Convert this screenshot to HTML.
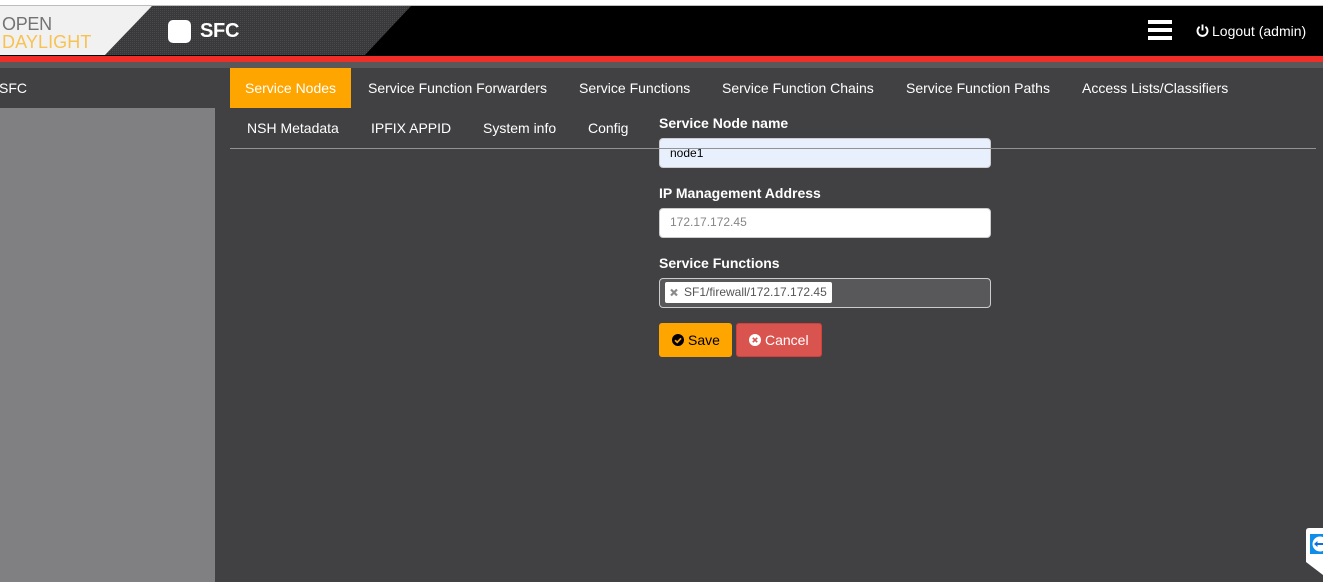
<!DOCTYPE html>
<html>
<head>
<meta charset="utf-8">
<style>
html,body{margin:0;padding:0;background:#414143;}
body{width:1323px;height:582px;position:relative;overflow:hidden;font-family:"Liberation Sans",sans-serif;font-size:14px;color:#fff;}
.a{position:absolute;white-space:nowrap;}
.tab{position:absolute;white-space:nowrap;line-height:20px;height:20px;color:#fff;font-size:14px;}
.lbl{position:absolute;white-space:nowrap;font-weight:bold;font-size:14px;line-height:20px;color:#fff;}
.inp{position:absolute;left:659px;width:330px;height:28px;border:1px solid #ccc;border-radius:4px;box-sizing:content-box;}
</style>
</head>
<body>
<div class="a" style="left:0;top:0;width:1323px;height:5px;background:#fff;"></div>
<div class="a" style="left:0;top:5px;width:1323px;height:1px;background:#bdbdbd;"></div>
<div class="a" style="left:0;top:6px;width:1323px;height:50px;background:#000;"></div>
<svg class="a" style="left:0;top:6px;" width="420" height="49" viewBox="0 0 420 49">
  <defs>
    <pattern id="d" width="2" height="2" patternUnits="userSpaceOnUse">
      <rect width="2" height="2" fill="#39393b"/>
      <rect width="1" height="1" fill="#4a4a4c"/>
    </pattern>
  </defs>
  <polygon points="105,49 152,0 411,0 365,49" fill="url(#d)"/>
  <polygon points="0,0 152,0 105,49 0,49" fill="#f1f1f1"/>
</svg>
<div class="a" style="left:2px;top:14px;font-size:18px;line-height:20px;color:#737373;letter-spacing:-.3px;">OPEN</div>
<div class="a" style="left:2px;top:32px;font-size:18px;line-height:20px;color:#f8c252;letter-spacing:.1px;">DAYLIGHT</div>
<div class="a" style="left:168px;top:20px;width:23px;height:23px;background:#fff;border-radius:5px;"></div>
<div class="a" style="left:200px;top:19px;font-size:20px;line-height:25px;font-weight:bold;color:#fff;letter-spacing:-.3px;">SFC</div>

<div class="a" style="left:1148px;top:20px;width:24px;height:4px;background:#fff;"></div>
<div class="a" style="left:1148px;top:28px;width:24px;height:4px;background:#fff;"></div>
<div class="a" style="left:1148px;top:36px;width:24px;height:4px;background:#fff;"></div>
<svg class="a" style="left:1196px;top:24px;" width="13" height="13" viewBox="0 0 13 13">
  <path d="M3.6 2.8A5 5 0 1 0 9.4 2.8" fill="none" stroke="#fff" stroke-width="1.9"/>
  <path d="M6.5 0.5V6.5" fill="none" stroke="#fff" stroke-width="1.9"/>
</svg>
<div class="a" style="left:1212px;top:21px;line-height:20px;color:#fff;">Logout (admin)</div>

<div class="a" style="left:0;top:56px;width:1323px;height:6px;background:#ee2e27;"></div>
<div class="a" style="left:0;top:62px;width:1323px;height:6px;background:#58585a;"></div>

<div class="a" style="left:-1px;top:78px;line-height:20px;color:#fff;">SFC</div>
<div class="a" style="left:0;top:108px;width:215px;height:474px;background:#808083;"></div>

<div class="a" style="left:230px;top:68px;width:121px;height:40px;background:#ffa500;"></div>
<div class="tab" style="left:245px;top:78px;">Service Nodes</div>
<div class="tab" style="left:368px;top:78px;">Service Function Forwarders</div>
<div class="tab" style="left:579px;top:78px;">Service Functions</div>
<div class="tab" style="left:722px;top:78px;">Service Function Chains</div>
<div class="tab" style="left:906px;top:78px;">Service Function Paths</div>
<div class="tab" style="left:1082px;top:78px;">Access Lists/Classifiers</div>
<div class="tab" style="left:247px;top:118px;">NSH Metadata</div>
<div class="tab" style="left:371px;top:118px;">IPFIX APPID</div>
<div class="tab" style="left:483px;top:118px;">System info</div>
<div class="tab" style="left:588px;top:118px;">Config</div>

<div class="lbl" style="left:659px;top:113px;">Service Node name</div>
<div class="inp" style="top:138px;background:#e8f0fe;"></div>
<div class="a" style="left:670px;top:146px;font-size:12px;line-height:14px;color:#000;">node1</div>
<div class="a" style="left:230px;top:148px;width:1086px;height:1px;background:#929294;"></div>

<div class="lbl" style="left:659px;top:183px;">IP Management Address</div>
<div class="inp" style="top:208px;background:#fff;"></div>
<div class="a" style="left:670px;top:215px;font-size:12px;line-height:14px;color:#858585;">172.17.172.45</div>

<div class="lbl" style="left:659px;top:253px;">Service Functions</div>
<div class="inp" style="top:278px;background:#58585a;"></div>
<div class="a" style="left:665px;top:282px;width:167px;height:21px;background:#fff;border-radius:2px;"></div>
<svg class="a" style="left:670px;top:288px;" width="8" height="9" viewBox="0 0 8 9">
  <path d="M1 1.5L7 7.5M7 1.5L1 7.5" stroke="#8a8a8a" stroke-width="2.2" fill="none"/>
</svg>
<div class="a" style="left:684px;top:285px;font-size:12px;line-height:14px;color:#555;">SF1/firewall/172.17.172.45</div>

<div class="a" style="left:659px;top:323px;width:73px;height:34px;background:#ffa500;border-radius:3px;"></div>
<svg class="a" style="left:672px;top:334px;" width="12" height="12" viewBox="0 0 12 12">
  <circle cx="6" cy="6" r="6" fill="#000"/>
  <path d="M3 6.2L5.2 8.3L9 4.3" stroke="#ffa500" stroke-width="1.7" fill="none"/>
</svg>
<div class="a" style="left:688px;top:330px;line-height:20px;color:#000;">Save</div>

<div class="a" style="left:736px;top:323px;width:84px;height:32px;background:#d9534f;border:1px solid #d43f3a;border-radius:3px;"></div>
<svg class="a" style="left:749px;top:334px;" width="12" height="12" viewBox="0 0 12 12">
  <circle cx="6" cy="6" r="6" fill="#fff"/>
  <path d="M3.8 3.8L8.2 8.2M8.2 3.8L3.8 8.2" stroke="#d9534f" stroke-width="1.7" fill="none"/>
</svg>
<div class="a" style="left:765px;top:330px;line-height:20px;color:#fff;">Cancel</div>

<svg class="a" style="left:1306px;top:528px;" width="17" height="47" viewBox="0 0 17 47">
  <path d="M17 0H3Q0 0 0 3V34L17 47Z" fill="#fff"/>
  <rect x="4" y="6" width="13" height="20" fill="#0e8ee9"/>
  <circle cx="14" cy="16" r="7.5" fill="#fff"/>
  <path d="M8 16L11.5 13V15H17V17H11.5V19Z" fill="#0e6ee0"/>
</svg>
</body>
</html>
